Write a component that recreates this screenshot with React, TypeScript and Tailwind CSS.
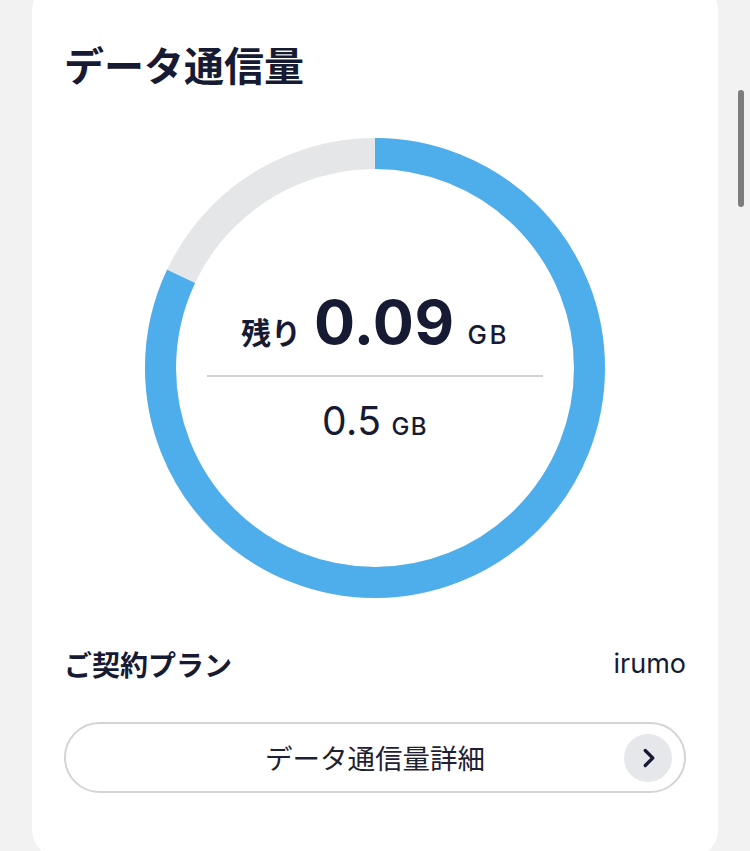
import React from 'react';
import { ChevronRight } from 'lucide-react';

const FONT = 'font-["Inter","Noto_Sans_CJK_JP",sans-serif]';
const CJK = 'font-["Noto_Sans_CJK_JP",sans-serif]';

const total = 0.5;
const remaining = 0.09;

const UsageRing: React.FC = () => {
  const size = 460;
  const stroke = 31;
  const r = (size - stroke) / 2;
  const c = 2 * Math.PI * r;
  const used = 1 - remaining / total;

  return (
    <div className="relative w-[460px] h-[460px]">
      <svg width={size} height={size} viewBox={`0 0 ${size} ${size}`}>
        <circle cx={size / 2} cy={size / 2} r={r} fill="none" stroke="#e5e6e8" strokeWidth={stroke} />
        <circle
          cx={size / 2}
          cy={size / 2}
          r={r}
          fill="none"
          stroke="#4eadeb"
          strokeWidth={stroke}
          strokeDasharray={`${c * used} ${c}`}
          transform={`rotate(-90 ${size / 2} ${size / 2})`}
        />
      </svg>
      <div className="absolute inset-0 flex flex-col items-center justify-center pb-[4px] text-[#161b33]">
        <div className="flex items-baseline gap-[13px] h-[62px] leading-none">
          <span className={`${CJK} text-[30px] font-bold`}>残り</span>
          <span className="text-[61px] font-bold tracking-[0.5px]">0.09</span>
          <span className="text-[26px] font-medium tracking-[2.5px]">GB</span>
        </div>
        <div className="mt-[21px] w-[336px] h-[2px] bg-[#d2d2d2]" />
        <div className="mt-[24px] flex items-baseline gap-[10px] h-[39px] leading-none">
          <span className="text-[39px] tracking-[0.5px]">0.5</span>
          <span className="text-[24px] font-medium tracking-[1.5px]">GB</span>
        </div>
      </div>
    </div>
  );
};

export default function App() {
  return (
    <div className={`relative h-[851px] overflow-hidden bg-[#f2f2f2] ${FONT}`}>
      <div className="mx-[32px] -mt-[17px] bg-white rounded-[27px] px-[32px] pt-[57px] pb-[64px]">
        <h2 className={`${CJK} text-[40px] leading-[48px] font-bold text-[#161b33]`}>データ通信量</h2>

        <div className="mt-[50px] flex justify-center">
          <UsageRing />
        </div>

        <div className="mt-[46px] flex items-center justify-between h-[40px] leading-[40px] text-[#161b33]">
          <span className={`${CJK} text-[28px] font-bold`}>ご契約プラン</span>
          <span className="text-[27px]">irumo</span>
        </div>

        <button className="mt-[38px] w-full h-[71px] rounded-full border-2 border-[#d4d4d4] bg-white grid grid-cols-[48px_1fr_48px] items-center px-[12px]">
          <span />
          <span className={`${CJK} text-[27.5px] text-[#1e2132] text-center`}>データ通信量詳細</span>
          <span className="w-[48px] h-[48px] rounded-full bg-[#e6e7ea] flex items-center justify-center">
            <ChevronRight size={30} strokeWidth={2.6} className="text-[#161b33] ml-[1px]" />
          </span>
        </button>
      </div>

      <div className="absolute left-[738px] top-[90px] w-[6px] h-[117px] rounded-full bg-[#7d7d7d]" />
    </div>
  );
}
